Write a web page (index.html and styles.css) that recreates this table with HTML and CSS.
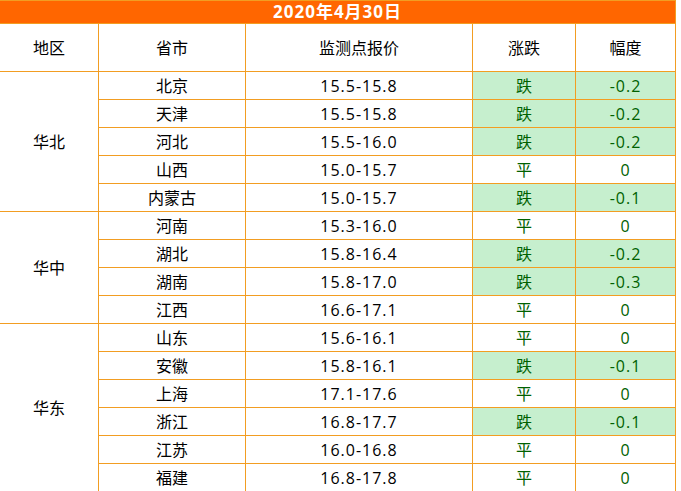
FILE: index.html
```html
<!DOCTYPE html>
<html lang="zh-CN">
<head>
<meta charset="utf-8">
<title>2020年4月30日</title>
<link rel="stylesheet" href="styles.css">
</head>
<body>
<table class="price-table">
  <colgroup>
    <col class="c-region">
    <col class="c-prov">
    <col class="c-price">
    <col class="c-trend">
    <col class="c-range">
  </colgroup>
  <thead>
    <tr class="title-row"><th colspan="5">2020年4月30日</th></tr>
    <tr class="head-row"><th>地区</th><th>省市</th><th>监测点报价</th><th>涨跌</th><th>幅度</th></tr>
  </thead>
  <tbody>
    <tr><td class="region" rowspan="5">华北</td><td>北京</td><td class="num">15.5-15.8</td><td class="g down">跌</td><td class="g down num">-0.2</td></tr>
    <tr><td>天津</td><td class="num">15.5-15.8</td><td class="g down">跌</td><td class="g down num">-0.2</td></tr>
    <tr><td>河北</td><td class="num">15.5-16.0</td><td class="g down">跌</td><td class="g down num">-0.2</td></tr>
    <tr><td>山西</td><td class="num">15.0-15.7</td><td class="g">平</td><td class="g num">0</td></tr>
    <tr><td>内蒙古</td><td class="num">15.0-15.7</td><td class="g down">跌</td><td class="g down num">-0.1</td></tr>

    <tr><td class="region" rowspan="4">华中</td><td>河南</td><td class="num">15.3-16.0</td><td class="g">平</td><td class="g num">0</td></tr>
    <tr><td>湖北</td><td class="num">15.8-16.4</td><td class="g down">跌</td><td class="g down num">-0.2</td></tr>
    <tr><td>湖南</td><td class="num">15.8-17.0</td><td class="g down">跌</td><td class="g down num">-0.3</td></tr>
    <tr><td>江西</td><td class="num">16.6-17.1</td><td class="g">平</td><td class="g num">0</td></tr>

    <tr><td class="region" rowspan="6">华东</td><td>山东</td><td class="num">15.6-16.1</td><td class="g">平</td><td class="g num">0</td></tr>
    <tr><td>安徽</td><td class="num">15.8-16.1</td><td class="g down">跌</td><td class="g down num">-0.1</td></tr>
    <tr><td>上海</td><td class="num">17.1-17.6</td><td class="g">平</td><td class="g num">0</td></tr>
    <tr><td>浙江</td><td class="num">16.8-17.7</td><td class="g down">跌</td><td class="g down num">-0.1</td></tr>
    <tr><td>江苏</td><td class="num">16.0-16.8</td><td class="g">平</td><td class="g num">0</td></tr>
    <tr><td>福建</td><td class="num">16.8-17.8</td><td class="g">平</td><td class="g num">0</td></tr>
  </tbody>
</table>
</body>
</html>
```

FILE: styles.css
```css
html, body {
  margin: 0;
  padding: 0;
  background: #ffffff;
}

body {
  font-family: "Open Sans", "Noto Sans CJK SC", sans-serif;
  font-size: 16px;
  color: #000000;
}

.price-table {
  border-collapse: collapse;
  table-layout: fixed;
  width: 676px;
  margin-left: -1px;
}

.c-region { width: 99px; }
.c-prov { width: 147px; }
.c-price { width: 227px; }
.c-trend { width: 103px; }
.c-range { width: 100px; }

.price-table th,
.price-table td {
  border: 1px solid #f29d22;
  text-align: center;
  vertical-align: middle;
  padding: 0;
  font-weight: normal;
  line-height: 18px;
}

.title-row th {
  background: #ff6600;
  color: #ffffff;
  font-weight: bold;
  font-size: 17px;
  height: 22px;
  line-height: 20px;
  letter-spacing: 1px;
}

.head-row th {
  height: 47px;
}

.price-table tbody td {
  height: 27px;
}

.price-table td.num {
  letter-spacing: 1px;
}

.price-table td.g {
  color: #006100;
}

.price-table td.down {
  background: #c6efce;
}
```
